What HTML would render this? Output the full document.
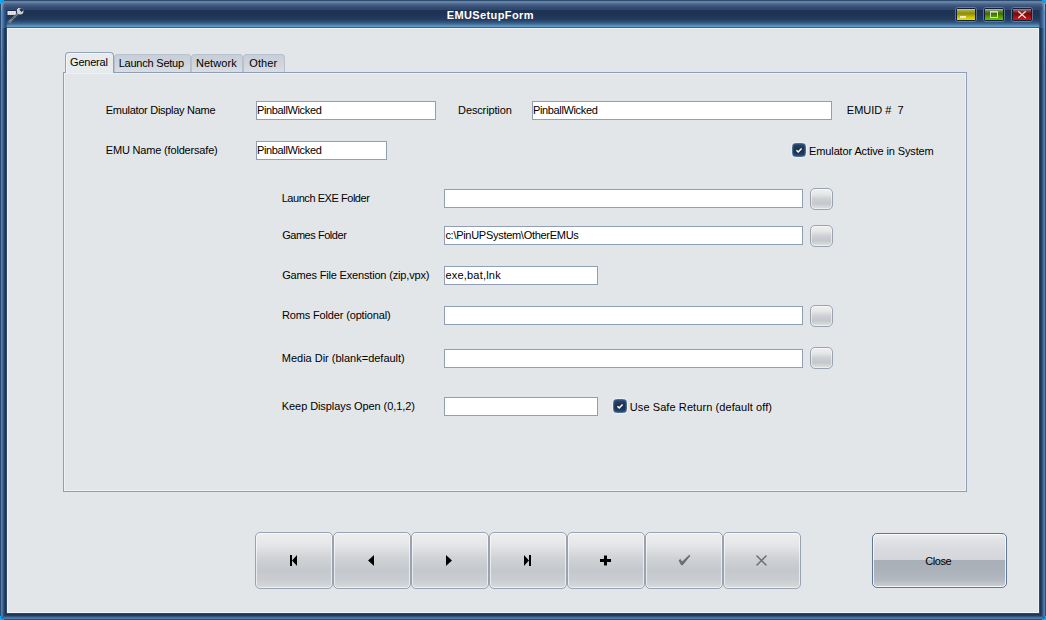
<!DOCTYPE html>
<html>
<head>
<meta charset="utf-8">
<title>EMUSetupForm</title>
<style>
html,body{margin:0;padding:0;}
body{width:1046px;height:620px;overflow:hidden;background:#00b0ff;font-family:"Liberation Sans",sans-serif;font-size:11px;color:#000;}
#win{position:absolute;left:0;top:0;width:1046px;height:620px;overflow:hidden;background:#2b4a72;}
#in{position:absolute;left:0;top:0;width:1046px;height:620px;clip-path:inset(1px round 4px);background:#3a6290;}
.rg{position:absolute;box-sizing:border-box;border-style:solid;border-width:0 1px 1px 1px;}
.fs{position:absolute;top:28px;width:3px;height:44px;}
#tb{position:absolute;left:0;top:0;width:1046px;height:28px;background:linear-gradient(to bottom,#2a4a72 0,#2a4a72 1px,#6a86a8 1px,#64809f 2.5px,#566f92 3.5px,#4a6288 4.5px,#40587f 5.5px,#3a5279 6.5px,#344c74 7.5px,#2f4a70 8.5px,#2c486c 9.5px,#223a5e 10px,#243d64 19.5px,#375e86 22.5px,#416c96 23.5px,#4f80ac 24.5px,#5c95c2 25.5px,#62a0cc 26.5px,#62a0cc 27px,#3d5f88 27px,#3d5f88 28px);}
#tbn{position:absolute;left:6px;top:9.5px;width:1034px;height:18.5px;border-radius:4px 4px 0 0;background:linear-gradient(to bottom,#1e3252 0,#1e3252 .5px,#1f3454 4.5px,#223a5e 8.5px,#243d64 10px,#2a4a70 11px,#2f5278 12px,#375e86 13px,#416c96 14px,#4f80ac 15px,#5c95c2 16px,#62a0cc 17px,#62a0cc 17.5px,#3d5f88 17.5px,#3d5f88 18.5px);}
.ft{position:absolute;top:1px;width:7px;height:27px;}
#title{position:absolute;left:0;top:8px;width:980px;text-align:center;color:#fff;font-weight:bold;font-size:11px;line-height:14px;white-space:pre;}
#content{position:absolute;left:7px;top:28px;width:1032px;height:585px;background:#e3e6e9;box-shadow:inset 1px 1px 0 #f0f2f4,inset -1px -1px 0 #f0f2f4;}
.fld span{position:absolute;top:0;white-space:pre;line-height:17px;}
.abs{position:absolute;}
.lbl{position:absolute;white-space:pre;line-height:14px;height:14px;}
.fld{position:absolute;box-sizing:border-box;height:19px;border:1px solid #909fb6;background:#fff;padding:0;line-height:17px;white-space:pre;overflow:hidden;}
.sb{position:absolute;box-sizing:border-box;width:23px;height:22px;border:1px solid #98a2b1;border-radius:5px;background:linear-gradient(to bottom,#f0f0f0 0,#e6e7e8 25%,#cdd0d3 50%,#c4c8cc 72%,#d6d8da 90%,#e0e1e2 100%);box-shadow:inset 0 0 0 1px rgba(255,255,255,.5);}
.nb{position:absolute;box-sizing:border-box;top:532px;width:78px;height:57px;border:1px solid #98a2b1;border-radius:5px;background:linear-gradient(to bottom,#eeeeef 0,#e6e7e8 20%,#d0d3d6 45%,#c4c8cc 68%,#c9ccd0 85%,#d8dadc 100%);box-shadow:inset 0 0 0 1px rgba(255,255,255,.6);}
.nb svg{position:absolute;left:0;top:0;filter:drop-shadow(0 0 .7px rgba(255,255,255,.95));}
.cb{position:absolute;box-sizing:border-box;width:14px;height:14px;border:1px solid #486d99;border-radius:3.5px;background:linear-gradient(to bottom,#2a456c 0,#1e3556 35%,#1c3253 65%,#29446b 100%);box-shadow:0 0 0 1px rgba(255,255,255,.35),inset 0 0 0 0.5px rgba(70,110,155,.6);}
.cb svg{position:absolute;left:0;top:0;}
.tab{position:absolute;box-sizing:border-box;top:54px;height:18px;border:1px solid #b7c0cd;border-bottom:none;border-radius:4px 4px 0 0;background:linear-gradient(to bottom,#c8ced7 0,#d0d5dc 50%,#dadde2 100%);}
.tab span,#tabA span{position:absolute;white-space:pre;line-height:14px;}
#tabA{position:absolute;box-sizing:border-box;left:65px;top:52px;width:49px;height:21px;border:1px solid #93a3b9;border-bottom:none;border-radius:4px 4px 0 0;background:#e8ebee;box-shadow:inset 1px 1px 0 #f2f4f6;}
.wb{position:absolute;box-sizing:border-box;top:7px;width:22px;height:15px;border:1px solid rgba(125,155,195,.6);border-radius:3px;}
.wb i{position:absolute;left:0;top:0;width:18px;height:11px;border:1px solid #0e1f3f;border-radius:1.5px;display:block;}
.wb svg{position:absolute;left:1px;top:1px;}
</style>
</head>
<body>
<div id="win">
  <div id="in">
  <div id="tb"></div><div id="tbn"></div>
  <div class="rg" style="left:0px;top:28px;width:1046px;height:592px;border-color:#2b4a72;border-radius:0 0 4px 4px;"></div>
  <div class="rg" style="left:1px;top:28px;width:1044px;height:591px;border-color:#4e82ad;border-radius:0 0 3.5px 3.5px;"></div>
  <div class="rg" style="left:2px;top:28px;width:1042px;height:590px;border-color:#446f9c;border-radius:0 0 2.5px 2.5px;"></div>
  <div class="rg" style="left:3px;top:28px;width:1040px;height:589px;border-color:#335580;border-radius:0 0 1.5px 1.5px;"></div>
  <div class="rg" style="left:4px;top:28px;width:1038px;height:588px;border-color:#243f66;border-radius:0 0 1px 1px;"></div>
  <div class="rg" style="left:5px;top:28px;width:1036px;height:587px;border-color:#1e3456;border-radius:0 0 0.5px 0.5px;"></div>
  <div class="rg" style="left:6px;top:28px;width:1034px;height:586px;border-color:#2e486c;border-radius:0 0 0px 0px;"></div>
  <div class="ft" style="left:0;top:1px;height:9px;background:linear-gradient(to right,#2b4a72 0,#2b4a72 1px,#7aa8cc 1px,#7aa8cc 2px,rgba(122,168,204,.6) 2px,rgba(122,168,204,.6) 3px,rgba(122,168,204,.3) 3px,rgba(122,168,204,.3) 4px,rgba(122,168,204,.1) 4px,rgba(122,168,204,0) 6px);"></div>
  <div class="ft" style="left:0;top:10px;height:18px;background:linear-gradient(to right,#2b4a72 0,#2b4a72 1px,#5e96c6 1px,#5e96c6 2px,#4c7eb0 2px,#4c7eb0 3px,#3e6a9c 3px,#3e6a9c 4px,#33588a 4px,#33588a 5px,#2b4a76 5px,#2b4a76 6px,rgba(36,64,106,.6) 6px,rgba(36,64,106,.6) 7px);"></div>
  <div class="fs" style="left:1px;width:1px;background:linear-gradient(to bottom,rgba(120,185,235,.45),rgba(120,185,235,0));"></div>
  <div class="ft" style="right:0;top:1px;height:9px;background:linear-gradient(to left,#2b4a72 0,#2b4a72 1px,#7aa8cc 1px,#7aa8cc 2px,rgba(122,168,204,.6) 2px,rgba(122,168,204,.6) 3px,rgba(122,168,204,.3) 3px,rgba(122,168,204,.3) 4px,rgba(122,168,204,.1) 4px,rgba(122,168,204,0) 6px);"></div>
  <div class="ft" style="right:0;top:10px;height:18px;background:linear-gradient(to left,#2b4a72 0,#2b4a72 1px,#5e96c6 1px,#5e96c6 2px,#4c7eb0 2px,#4c7eb0 3px,#3e6a9c 3px,#3e6a9c 4px,#33588a 4px,#33588a 5px,#2b4a76 5px,#2b4a76 6px,rgba(36,64,106,.6) 6px,rgba(36,64,106,.6) 7px);"></div>
  <div class="fs" style="right:1px;width:1px;background:linear-gradient(to bottom,rgba(120,185,235,.45),rgba(120,185,235,0));"></div>
  <div class="wb" style="left:955px;"><i style="background:linear-gradient(to bottom,#e0e0a4 0,#aeac44 1.2px,#9c9922 3px,#8e8b0c 4.8px,#a8a300 6px,#c8c200 8px,#dcd600 10px,#e4de00 11px);"></i><svg width="18" height="11"><rect x="3" y="7" width="6" height="2" fill="#e8e8e8"/></svg></div>
  <div class="wb" style="left:983px;"><i style="background:linear-gradient(to bottom,#c8d0b4 0,#84985c 1.2px,#5e7c28 3px,#3e6808 4.8px,#488400 6px,#58a000 8px,#68b800 10px,#70c000 11px);"></i><svg width="18" height="11"><rect x="5.5" y="2.5" width="7" height="6" fill="none" stroke="#d4d6c8" stroke-width="1"/><rect x="5" y="2" width="8" height="1.6" fill="#d4d6c8"/></svg></div>
  <div class="wb" style="left:1011px;"><i style="background:linear-gradient(to bottom,#b49292 0,#945252 1.2px,#7e2a28 3px,#700c0a 4.8px,#8c0c0a 6px,#b01010 8px,#c81412 10px,#d01614 11px);"></i><svg width="18" height="11"><path d="M5.2 2.2 L12.8 9 M12.8 2.2 L5.2 9" stroke="#e2dcdc" stroke-width="1.3" fill="none"/></svg></div>
  <svg class="abs" style="left:4px;top:4px;" width="24" height="22" viewBox="4 4 24 22">
    <rect x="7.5" y="10.3" width="8.4" height="0.8" fill="#16284a"/>
    <rect x="7.5" y="11" width="8.4" height="3.9" fill="#e6e6e6"/>
    <path d="M9.5 11.4v3.2M11.5 11.4v3.2M13.5 11.4v3.2" stroke="#cfcfcf" stroke-width="0.8" fill="none"/>
    <path d="M10 21.3 L18.4 13" stroke="#858585" stroke-width="2" stroke-linecap="round" fill="none"/>
    <path d="M12.2 19 L17.2 14.1" stroke="#2e2e2e" stroke-width="0.9" stroke-dasharray="0.9 0.9" fill="none"/>
    <circle cx="9.9" cy="21.4" r="1.1" fill="#4a5666" stroke="#a0a0a0" stroke-width="0.8"/>
    <defs><clipPath id="hc"><circle cx="20.2" cy="11.2" r="3.2"/></clipPath></defs>
    <circle cx="20.2" cy="11.2" r="3.2" fill="#cecece"/>
    <path d="M20.5 10.9 L24.5 6.9" stroke="#1b2f50" stroke-width="3.1" fill="none" clip-path="url(#hc)"/>
    <path d="M17.3 10.4 A3.2 3.2 0 0 1 19 8.3" stroke="#f6f6f6" stroke-width="0.9" fill="none"/>
  </svg>
  <div id="title" style="letter-spacing:0.395px;left:0.30px;">EMUSetupForm</div>
  <div id="content"></div>
  <div class="abs" id="panel" style="left:63px;top:72px;width:904px;height:420px;box-sizing:border-box;border:1px solid #8e9eb5;box-shadow:inset 1px 1px 0 #eef0f2,inset -1px -1px 0 #eef0f2;"></div>
  <div class="tab" style="left:114px;width:77px;"><span style="left:3.65px;top:1px;letter-spacing:-0.218px;">Launch Setup</span></div>
  <div class="tab" style="left:191px;width:52px;"><span style="left:3.95px;top:1px;letter-spacing:0.058px;">Network</span></div>
  <div class="tab" style="left:243px;width:42px;"><span style="left:5.30px;top:1px;letter-spacing:0.100px;">Other</span></div>
  <div id="tabA"><span style="left:4.05px;top:2px;letter-spacing:-0.217px;">General</span></div>
  <div class="lbl" style="left:105.80px;top:103px;letter-spacing:-0.290px;">Emulator Display Name</div>
  <div class="lbl" style="left:105.80px;top:143px;letter-spacing:-0.178px;">EMU Name (foldersafe)</div>
  <div class="lbl" style="left:458.10px;top:103px;letter-spacing:-0.135px;">Description</div>
  <div class="lbl" style="left:846.80px;top:103px;">EMUID #  7</div>
  <div class="lbl" style="left:809.10px;top:144px;letter-spacing:-0.131px;">Emulator Active in System</div>
  <div class="lbl" style="left:281.65px;top:191px;letter-spacing:-0.447px;">Launch EXE Folder</div>
  <div class="lbl" style="left:282.15px;top:228px;letter-spacing:-0.455px;">Games Folder</div>
  <div class="lbl" style="left:282.15px;top:268px;letter-spacing:-0.171px;">Games File Exenstion (zip,vpx)</div>
  <div class="lbl" style="left:281.95px;top:308px;letter-spacing:-0.150px;">Roms Folder (optional)</div>
  <div class="lbl" style="left:281.80px;top:351px;letter-spacing:-0.010px;">Media Dir (blank=default)</div>
  <div class="lbl" style="left:281.80px;top:399px;letter-spacing:-0.080px;">Keep Displays Open (0,1,2)</div>
  <div class="lbl" style="left:629.80px;top:400px;letter-spacing:0.084px;">Use Safe Return (default off)</div>
  <div class="fld" style="left:256px;top:101px;width:180px;"><span style="left:-0.10px;letter-spacing:-0.350px;">PinballWicked</span></div>
  <div class="fld" style="left:256px;top:141px;width:131px;"><span style="left:-0.10px;letter-spacing:-0.350px;">PinballWicked</span></div>
  <div class="fld" style="left:532px;top:101px;width:300px;"><span style="left:-0.10px;letter-spacing:-0.350px;">PinballWicked</span></div>
  <div class="fld" style="left:444px;top:189px;width:359px;"></div>
  <div class="fld" style="left:444px;top:226px;width:359px;"><span style="left:0.40px;letter-spacing:-0.285px;">c:\PinUPSystem\OtherEMUs</span></div>
  <div class="fld" style="left:444px;top:266px;width:154px;"><span style="left:0.40px;letter-spacing:0.205px;">exe,bat,lnk</span></div>
  <div class="fld" style="left:444px;top:306px;width:359px;"></div>
  <div class="fld" style="left:444px;top:349px;width:359px;"></div>
  <div class="fld" style="left:444px;top:397px;width:154px;"></div>
  <div class="sb" style="left:810px;top:188px;"></div>
  <div class="sb" style="left:810px;top:225px;"></div>
  <div class="sb" style="left:810px;top:305px;"></div>
  <div class="sb" style="left:810px;top:347px;"></div>
  <div class="cb" style="left:792px;top:143px;"><svg width="12" height="12" viewBox="0 0 12 12"><path d="M3.4 6.2 L5.2 8 L8.6 4.4" fill="none" stroke="#fff" stroke-width="1.5"/></svg></div>
  <div class="cb" style="left:613px;top:399px;"><svg width="12" height="12" viewBox="0 0 12 12"><path d="M3.4 6.2 L5.2 8 L8.6 4.4" fill="none" stroke="#fff" stroke-width="1.5"/></svg></div>
  <div class="nb" style="left:255px;"><svg width="76" height="55" viewBox="1 1 76 55"><path d="M35 23h2v11h-2z M37 28.5 L42 23 V34 Z" fill="#000"/></svg></div>
  <div class="nb" style="left:333px;"><svg width="76" height="55" viewBox="1 1 76 55"><path d="M35 28.5 L41 23 V34 Z" fill="#000"/></svg></div>
  <div class="nb" style="left:411px;"><svg width="76" height="55" viewBox="1 1 76 55"><path d="M41 28.5 L35 23 V34 Z" fill="#000"/></svg></div>
  <div class="nb" style="left:489px;"><svg width="76" height="55" viewBox="1 1 76 55"><path d="M40 23h2v11h-2z M40 28.5 L35 23 V34 Z" fill="#000"/></svg></div>
  <div class="nb" style="left:567px;"><svg width="76" height="55" viewBox="1 1 76 55"><path d="M37 23.5h3v3.5h4v3h-4v3.5h-3v-3.5h-4v-3h4z" fill="#000"/></svg></div>
  <div class="nb" style="left:645px;"><svg width="76" height="55" viewBox="1 1 76 55"><path d="M33.5 28.4 L35.3 26.7 L37.1 29.6 L44.3 22.8 L45.5 23.7 L37.8 33.3 L36.1 33.3 Z" fill="#6a6e73"/></svg></div>
  <div class="nb" style="left:723px;"><svg width="76" height="55" viewBox="1 1 76 55"><path d="M33.5 23.5 L43.5 33.5 M43.5 23.5 L33.5 33.5" fill="none" stroke="#6a6e73" stroke-width="1.7"/></svg></div>
  <div class="abs" id="close" style="left:872px;top:533px;width:135px;height:55px;box-sizing:border-box;border:1px solid #5e7896;border-radius:5px;background:linear-gradient(to bottom,#ecedee 0,#e2e3e6 12%,#d9dbdf 28%,#d3d6da 49%,#a9afb8 50%,#acb2ba 72%,#b5bac2 88%,#cfd2d7 100%);box-shadow:inset 0 0 0 1px rgba(255,255,255,.8);"><span class="abs" style="left:52.35px;top:20px;line-height:14px;white-space:pre;letter-spacing:-0.475px;">Close</span></div>
  </div>
  <svg class="abs" style="left:0;top:0;" width="1046" height="620" shape-rendering="crispEdges"><g fill="#00b0ff"><path d="M0 0h4v1h-2v1h-1v2h-1z"/><path d="M1046 0h-4v1h2v1h1v2h1z"/><path d="M0 620h4v-1h-2v-1h-1v-2h-1z"/><path d="M1046 620h-4v-1h2v-1h1v-2h1z"/></g></svg>
</div>
</body>
</html>
